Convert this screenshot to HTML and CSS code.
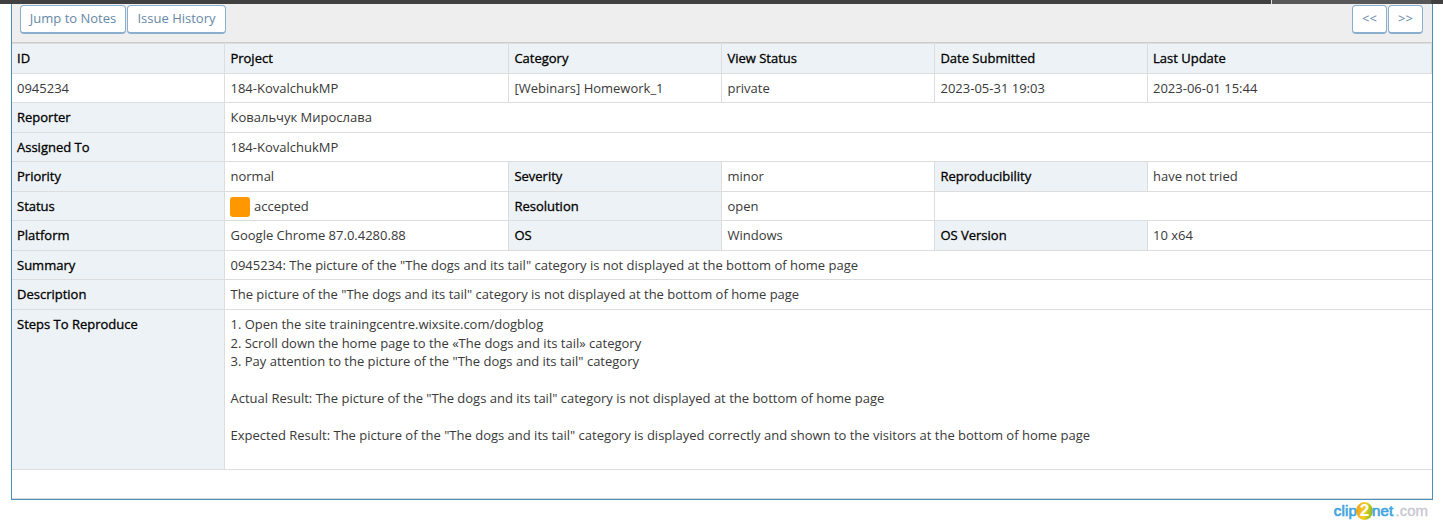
FILE: index.html
```html
<!DOCTYPE html>
<html lang="en">
<head>
<meta charset="utf-8">
<title>0945234: View Issue</title>
<link rel="stylesheet" href="styles.css">
</head>
<body>
<div class="topbar"><div class="topbar-user"></div></div>
<main class="widget">
  <div class="toolbar">
    <a class="btn btn-notes">Jump to Notes</a>
    <a class="btn btn-history">Issue History</a>
    <span class="spacer"></span>
    <a class="btn btn-nav">&lt;&lt;</a>
    <a class="btn btn-nav">&gt;&gt;</a>
  </div>
  <div class="details">
    <div class="th">ID</div><div class="th inner">Project</div><div class="th inner">Category</div><div class="th inner">View Status</div><div class="th inner">Date Submitted</div><div class="th">Last Update</div>
    <div class="td first">0945234</div><div class="td">184-KovalchukMP</div><div class="td">[Webinars] Homework_1</div><div class="td">private</div><div class="td">2023-05-31 19:03</div><div class="td last">2023-06-01 15:44</div>
    <div class="th">Reporter</div><div class="td span5">Ковальчук Мирослава</div>
    <div class="th">Assigned To</div><div class="td span5">184-KovalchukMP</div>
    <div class="th">Priority</div><div class="td">normal</div><div class="th inner">Severity</div><div class="td">minor</div><div class="th inner">Reproducibility</div><div class="td last">have not tried</div>
    <div class="th">Status</div><div class="td status"><i class="swatch"></i>accepted</div><div class="th inner">Resolution</div><div class="td">open</div><div class="td span2"></div>
    <div class="th">Platform</div><div class="td">Google Chrome 87.0.4280.88</div><div class="th inner">OS</div><div class="td">Windows</div><div class="th inner">OS Version</div><div class="td last">10 x64</div>
    <div class="th">Summary</div><div class="td span5">0945234: The picture of the "The dogs and its tail" category is not displayed at the bottom of home page</div>
    <div class="th">Description</div><div class="td span5">The picture of the "The dogs and its tail" category is not displayed at the bottom of home page</div>
    <div class="th">Steps To Reproduce</div>
    <div class="td span5">1. Open the site trainingcentre.wixsite.com/dogblog<br>2. Scroll down the home page to the «The dogs and its tail» category<br>3. Pay attention to the picture of the "The dogs and its tail" category<br><br>Actual Result: The picture of the "The dogs and its tail" category is not displayed at the bottom of home page<br><br>Expected Result: The picture of the "The dogs and its tail" category is displayed correctly and shown to the visitors at the bottom of home page</div>
    <div class="td span6"></div>
  </div>
</main>
<footer class="brand"><span class="brand-name">clip</span><span class="ball">2</span><span class="brand-name">net</span><span class="brand-tld">.com</span></footer>
</body>
</html>
```

FILE: styles.css
```css
* { box-sizing: border-box; }
body {
  margin: 0;
  height: 522px;
  overflow: hidden;
  background: #fff;
  color: #393939;
  font: 13px/18.5px "Open Sans", sans-serif;
}
.topbar {
  height: 4px;
  background: #404040;
  padding: 0 12px 0 1271px;
}
.topbar-user {
  height: 4px;
  background: #585858;
  border-left: 1px solid #e0e0e0;
}
.widget {
  margin-left: 11px;
  width: 1422px;
  border: 1px solid #4a8dbf;
  border-top: 0;
}
.toolbar {
  display: flex;
  gap: 2px;
  height: 39px;
  padding: 1px 9px 0 8px;
  background: #eee;
  border-bottom: 1px solid #ccc;
}
.btn {
  height: 29px;
  border: 1px solid #8aafce;
  border-bottom-width: 2px;
  border-radius: 4px;
  background: #fff;
  color: #6688a6;
  text-align: center;
  line-height: 25px;
}
.btn-notes { width: 106px; }
.btn-history { width: 99px; margin-left: -1px; }
.btn-nav { width: 35px; margin-left: -1px; }
.spacer { flex: 1; }
.details {
  display: grid;
  grid-template-columns: 213px 284px 213px 213px 213px 284px;
  grid-template-rows: 30px 29px 30px 29px 30px 29px 30px 29px 30px 160px 29px;
  border-top: 1px solid #ddd;
}
.th, .td {
  padding: 5px 5px 0 5.5px;
  border-right: 1px solid #ddd;
  border-bottom: 1px solid #ddd;
  white-space: nowrap;
}
.th {
  padding-left: 5px;
  background: #ecf2f5;
  color: #000;
  -webkit-text-stroke: 0.3px #000;
}
.inner { padding-left: 5.4px; }
.span2 { grid-column: span 2; border-right: 0; }
.span5 { grid-column: span 5; border-right: 0; }
.span6 { grid-column: span 6; border-right: 0; }
.first { padding-left: 5px; }
.last { padding-left: 5px; border-right: 0; }
.status { display: flex; gap: 4px; padding-left: 5px; }
.swatch {
  width: 20px;
  height: 20px;
  border-radius: 3px;
  background: #ff9800;
}
.brand {
  display: flex;
  align-items: center;
  justify-content: flex-end;
  height: 22px;
  padding-right: 15px;
  font: 15px/20px "Liberation Sans", Arial, sans-serif;
}
.brand-name {
  color: #43a5df;
  letter-spacing: 0.2px;
  -webkit-text-stroke: 0.7px #43a5df;
}
.brand-tld { color: #c6c6ce; margin-left: 2px; -webkit-text-stroke: 0.3px #c6c6ce; }
.ball {
  width: 17px;
  height: 18px;
  margin: 0 -1px;
  border-radius: 50%;
  background: linear-gradient(100deg, #f39a1c, #f4cf22 50%, #6ab82c);
  color: #fff;
  font-size: 17px;
  font-weight: bold;
  line-height: 18px;
  text-align: center;
}
```
